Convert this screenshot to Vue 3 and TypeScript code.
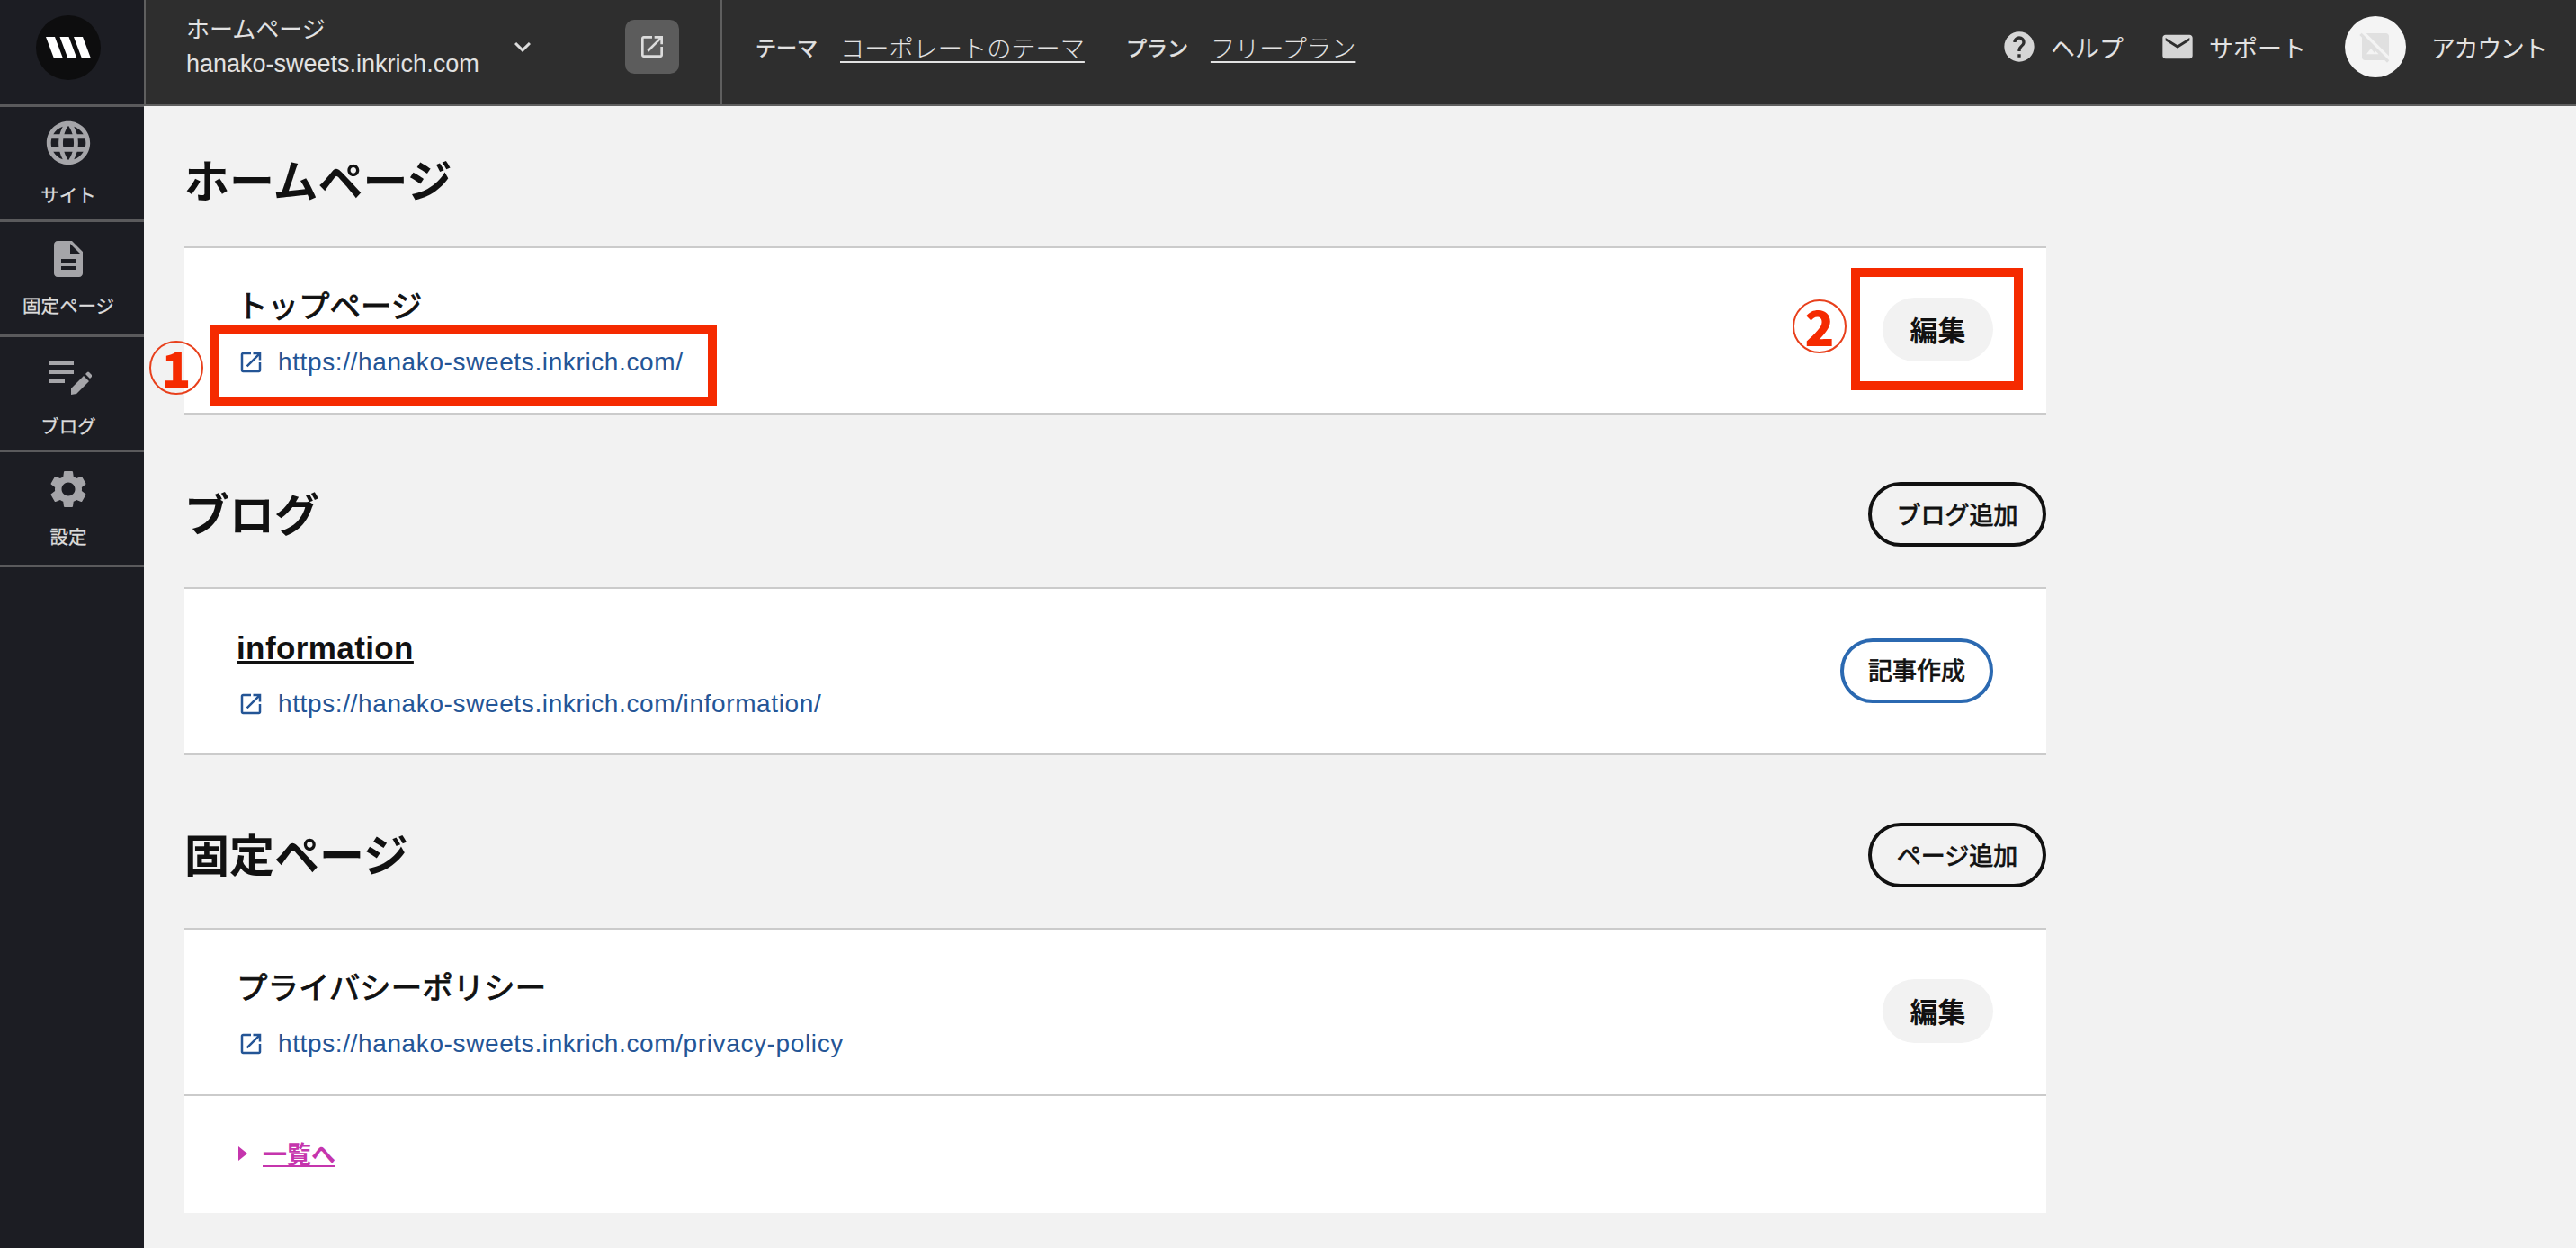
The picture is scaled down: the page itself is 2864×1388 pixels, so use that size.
<script setup lang="ts">
interface NavItem { label: string; kind: string }
const nav: NavItem[] = [
  { label: 'サイト', kind: 'globe' },
  { label: '固定ページ', kind: 'file' },
  { label: 'ブログ', kind: 'blog' },
  { label: '設定', kind: 'gear' },
]
const openPath = 'M19 19H5V5h7V3H5c-1.11 0-2 .9-2 2v14c0 1.1.89 2 2 2h14c1.1 0 2-.9 2-2v-7h-2v7zM14 3v2h3.59l-9.83 9.83 1.41 1.41L19 6.41V10h2V3h-7z'
</script>

<template>
  <div class="app">
    <aside class="side">
      <div class="logo-cell">
        <div class="logo">
          <svg width="50" height="24" viewBox="0 0 50 24"><path d="M0 0h10l9 24H9zM15.5 0h10l9 24h-10zM31 0h10l9 24H40z" fill="#fff"/></svg>
        </div>
      </div>
      <div v-for="n in nav" :key="n.kind" class="nav-item" :class="'nav-' + n.kind">
        <svg v-if="n.kind === 'globe'" width="58" height="58" viewBox="0 0 24 24" fill="#a5a5a9"><path d="M11.99 2C6.47 2 2 6.48 2 12s4.47 10 9.99 10C17.52 22 22 17.52 22 12S17.52 2 11.99 2zm6.93 6h-2.95c-.32-1.25-.78-2.45-1.38-3.56 1.84.63 3.37 1.91 4.33 3.56zM12 4.04c.83 1.2 1.48 2.53 1.91 3.96h-3.82c.43-1.43 1.08-2.76 1.91-3.96zM4.26 14C4.1 13.36 4 12.69 4 12s.1-1.36.26-2h3.38c-.08.66-.14 1.32-.14 2 0 .68.06 1.34.14 2H4.26zm.82 2h2.95c.32 1.25.78 2.45 1.38 3.56-1.84-.63-3.37-1.9-4.33-3.56zm2.95-8H5.08c.96-1.66 2.49-2.93 4.33-3.56C8.81 5.55 8.35 6.75 8.03 8zM12 19.96c-.83-1.2-1.48-2.53-1.91-3.96h3.82c-.43 1.43-1.08 2.76-1.91 3.96zM14.34 14H9.66c-.09-.66-.16-1.32-.16-2 0-.68.07-1.35.16-2h4.68c.09.65.16 1.32.16 2 0 .68-.07 1.34-.16 2zm.25 5.56c.6-1.11 1.06-2.31 1.38-3.56h2.95c-.96 1.65-2.49 2.93-4.33 3.56zM16.36 14c.08-.66.14-1.32.14-2 0-.68-.06-1.34-.14-2h3.38c.16.64.26 1.31.26 2s-.1 1.36-.26 2h-3.38z"/></svg>
        <svg v-else-if="n.kind === 'file'" width="48" height="48" viewBox="0 0 24 24" fill="#a5a5a9"><path d="M14 2H6c-1.1 0-1.99.9-1.99 2L4 20c0 1.1.89 2 1.99 2H18c1.1 0 2-.9 2-2V8l-6-6zm2 16H8v-2h8v2zm0-4H8v-2h8v2zm-3-5V3.5L18.5 9H13z"/></svg>
        <svg v-else-if="n.kind === 'blog'" width="48" height="40" viewBox="0 0 48 40" fill="#a5a5a9"><rect x="0" y="1" width="28" height="5"/><rect x="0" y="11" width="28" height="5"/><rect x="0" y="21" width="18" height="5"/><path d="M25 32 39 18l6 6-14 14-6 1zM41 16l2-2q1-1 2 0l3 3q1 1 0 2l-2 2z"/></svg>
        <svg v-else width="50" height="50" viewBox="0 0 24 24" fill="#a5a5a9"><path d="M19.14 12.94c.04-.3.06-.61.06-.94 0-.32-.02-.64-.07-.94l2.03-1.58c.18-.14.23-.41.12-.61l-1.92-3.32c-.12-.22-.37-.29-.59-.22l-2.39.96c-.5-.38-1.03-.7-1.62-.94l-.36-2.54c-.04-.24-.24-.41-.48-.41h-3.84c-.24 0-.43.17-.47.41l-.36 2.54c-.59.24-1.13.57-1.62.94l-2.39-.96c-.22-.08-.47 0-.59.22L2.74 8.87c-.12.21-.08.47.12.61l2.03 1.58c-.05.3-.09.63-.09.94s.02.64.07.94l-2.03 1.58c-.18.14-.23.41-.12.61l1.92 3.32c.12.22.37.29.59.22l2.39-.96c.5.38 1.03.7 1.62.94l.36 2.54c.05.24.24.41.48.41h3.84c.24 0 .44-.17.47-.41l.36-2.54c.59-.24 1.13-.56 1.62-.94l2.39.96c.22.08.47 0 .59-.22l1.92-3.32c.12-.22.07-.47-.12-.61l-2.01-1.58zM12 15.6c-1.98 0-3.6-1.62-3.6-3.6s1.62-3.6 3.6-3.6 3.6 1.62 3.6 3.6-1.62 3.6-3.6 3.6z"/></svg>
        <span class="nav-label">{{ n.label }}</span>
      </div>
    </aside>

    <div class="right">
      <header class="top">
        <div class="site">
          <div class="site-text">
            <div class="site-name">ホームページ</div>
            <div class="site-domain">hanako-sweets.inkrich.com</div>
          </div>
          <svg class="chev" width="36" height="36" viewBox="0 0 24 24" fill="#dcdcdc"><path d="M7.41 8.59 12 13.17l4.59-4.58L18 10l-6 6-6-6z"/></svg>
          <div class="open-btn">
            <svg width="32" height="32" viewBox="0 0 24 24" fill="#dcdcdc"><path :d="openPath"/></svg>
          </div>
        </div>
        <div class="meta">
          <span class="meta-k">テーマ</span><a class="meta-v theme">コーポレートのテーマ</a>
          <span class="meta-k plan">プラン</span><a class="meta-v">フリープラン</a>
        </div>
        <div class="tools">
          <span class="tool">
            <svg width="40" height="40" viewBox="0 0 24 24" fill="#d6d6d6"><path d="M12 2C6.48 2 2 6.48 2 12s4.48 10 10 10 10-4.48 10-10S17.52 2 12 2zm1 17h-2v-2h2v2zm2.07-7.75l-.9.92C13.45 12.9 13 13.5 13 15h-2v-.5c0-1.1.45-2.1 1.17-2.83l1.24-1.26c.37-.36.59-.86.59-1.41 0-1.1-.9-2-2-2s-2 .9-2 2H8c0-2.21 1.79-4 4-4s4 1.79 4 4c0 .88-.36 1.68-.93 2.25z"/></svg>
            ヘルプ
          </span>
          <span class="tool tool-mail">
            <svg width="40" height="40" viewBox="0 0 24 24" fill="#d6d6d6"><path d="M20 4H4c-1.1 0-1.99.9-1.99 2L2 18c0 1.1.9 2 2 2h16c1.1 0 2-.9 2-2V6c0-1.1-.9-2-2-2zm0 4l-8 5-8-5V6l8 5 8-5v2z"/></svg>
            サポート
          </span>
          <span class="avatar">
            <svg width="40" height="40" viewBox="0 0 24 24" fill="#e0e0e0"><path d="M21 5c0-1.1-.9-2-2-2H5.83L21 18.17V5zM2.81 2.81 1.39 4.22 3 5.83V19c0 1.1.9 2 2 2h13.17l1.61 1.61 1.41-1.41L2.81 2.81zM6 17l3-4 2.25 3 .82-1.1 2.1 2.1H6z"/></svg>
          </span>
          <span class="account">アカウント</span>
        </div>
      </header>

      <main class="main">
        <section class="sec sec-first">
          <div class="sec-head head-plain"><h2>ホームページ</h2></div>
          <div class="card">
            <div class="row">
              <div>
                <div class="title">トップページ</div>
                <a class="url"><svg width="30" height="30" viewBox="0 0 24 24" fill="#245596"><path :d="openPath"/></svg>https://hanako-sweets.inkrich.com/</a>
              </div>
              <button class="pill-soft">編集</button>
            </div>
            <div class="mark-box box-1"></div>
            <div class="mark mark-1">1</div>
            <div class="mark-box box-2"></div>
            <div class="mark mark-2">2</div>
          </div>
        </section>

        <section class="sec">
          <div class="sec-head"><h2>ブログ</h2><button class="pill-line">ブログ追加</button></div>
          <div class="card">
            <div class="row">
              <div>
                <div class="title title-link">information</div>
                <a class="url"><svg width="30" height="30" viewBox="0 0 24 24" fill="#245596"><path :d="openPath"/></svg>https://hanako-sweets.inkrich.com/information/</a>
              </div>
              <button class="pill-line pill-blue">記事作成</button>
            </div>
          </div>
        </section>

        <section class="sec">
          <div class="sec-head"><h2>固定ページ</h2><button class="pill-line">ページ追加</button></div>
          <div class="card">
            <div class="row">
              <div>
                <div class="title">プライバシーポリシー</div>
                <a class="url"><svg width="30" height="30" viewBox="0 0 24 24" fill="#245596"><path :d="openPath"/></svg>https://hanako-sweets.inkrich.com/privacy-policy</a>
              </div>
              <button class="pill-soft">編集</button>
            </div>
            <div class="more"><i class="tri"></i><a>一覧へ</a></div>
          </div>
        </section>
      </main>
    </div>
  </div>
</template>

<style>
html, body { margin: 0; background: #f2f2f2; }
</style>

<style scoped>
.app {
  display: flex;
  width: 2864px;
  height: 1388px;
  overflow: hidden;
  font-family: "Liberation Sans", "Noto Sans CJK JP", sans-serif;
  color: #111;
  background: #f2f2f2;
}
.side { width: 160px; flex: none; background: #1c1d23; color: #dcdcdc; }
.logo-cell {
  height: 116px;
  box-sizing: content-box;
  border-bottom: 3px solid #5a5a5c;
  padding-right: 8px;
  display: flex;
  align-items: flex-start;
  justify-content: center;
}
.logo {
  margin-top: 17px;
  width: 72px;
  height: 72px;
  border-radius: 50%;
  background: #0d0d0e;
  display: flex;
  align-items: center;
  justify-content: center;
}
.nav-item {
  height: 125px;
  border-bottom: 3px solid #5a5a5c;
  padding-right: 8px;
  display: flex;
  flex-direction: column;
  align-items: center;
}
.nav-globe svg { margin-top: 11px; }
.nav-file svg { margin-top: 17px; }
.nav-blog svg { margin-top: 25px; margin-left: 4px; }
.nav-gear svg { margin-top: 16px; }
.nav-label { font-size: 20.5px; line-height: 28px; white-space: nowrap; -webkit-text-stroke: .3px currentColor; }
.nav-globe .nav-label { margin-top: 16px; }
.nav-file .nav-label { margin-top: 15px; }
.nav-blog .nav-label { margin-top: 21px; }
.nav-gear .nav-label { margin-top: 15px; }

.right { flex: 1; min-width: 0; display: flex; flex-direction: column; }
.top {
  height: 116px;
  flex: none;
  background: #2e2e2e;
  border-bottom: 2px solid #5f5f5f;
  display: flex;
  align-items: center;
  color: #e2e2e2;
}
.site {
  width: 643px;
  height: 116px;
  box-sizing: border-box;
  border-left: 2px solid #5f5f5f;
  border-right: 2px solid #5f5f5f;
  padding: 0 0 12px 45px;
  display: flex;
  align-items: center;
}
.site-text { width: 356px; }
.site-name { font-size: 26px; line-height: 38px; }
.site-domain { font-size: 27px; line-height: 38px; }
.open-btn {
  margin-left: 96px;
  width: 60px;
  height: 60px;
  border-radius: 10px;
  background: #5c5c5c;
  display: flex;
  align-items: center;
  justify-content: center;
}
.meta { margin: 0 0 12px 37px; display: flex; align-items: center; }
.meta-k { font-size: 23px; font-weight: 400; -webkit-text-stroke: .6px currentColor; margin-right: 25px; }
.meta-v { font-size: 27.2px; text-decoration: underline; text-underline-offset: 4px; font-weight: 300; }
.plan { margin-left: 46px; }
.tools { margin: 0 33px 12px auto; display: flex; align-items: center; font-size: 27px; }
.tool { display: flex; align-items: center; gap: 15px; }
.tool-mail { margin-left: 40px; }
.avatar {
  margin-left: 43px;
  width: 68px;
  height: 68px;
  border-radius: 50%;
  background: #f4f4f4;
  display: flex;
  align-items: center;
  justify-content: center;
}
.account { margin-left: 28px; letter-spacing: -1.4px; }

.main { padding: 57px 0 0 45px; width: 2070px; }
.sec { margin-top: 75px; }
.sec-first { margin-top: 0; }
.sec-head {
  height: 72px;
  margin-bottom: 45px;
  display: flex;
  align-items: center;
  justify-content: space-between;
}
.head-plain { height: 52px; margin-bottom: 47px; }
h2 { margin: 0; padding-top: 4px; font-size: 50px; font-weight: 700; line-height: 52px; }
.card {
  position: relative;
  background: #fff;
  border-top: 2px solid #cbcbcb;
}
.row {
  height: 185px;
  box-sizing: border-box;
  border-bottom: 2px solid #cbcbcb;
  padding: 6px 59px 0 58px;
  display: flex;
  align-items: center;
  justify-content: space-between;
}
.title { font-size: 34.5px; font-weight: 400; -webkit-text-stroke: .9px currentColor; line-height: 44px; }
.title-link { font-family: "Liberation Sans", sans-serif; font-weight: 700; -webkit-text-stroke: 0; font-size: 35px; padding-top: 3px; margin-bottom: 1px; letter-spacing: .4px; text-decoration: underline; }
.url {
  margin-top: 20px;
  padding-left: 1px;
  display: flex;
  align-items: center;
  gap: 15px;
  font-size: 28px;
  letter-spacing: .62px;
  line-height: 40px;
  color: #245596;
}
.pill-soft {
  width: 123px;
  height: 71px;
  margin-top: -8px;
  border: 0;
  border-radius: 36px;
  background: #f2f2f2;
  font: 700 31px "Liberation Sans", "Noto Sans CJK JP", sans-serif;
  color: #111;
  padding: 0 0 2px;
}
.pill-line {
  width: 198px;
  height: 72px;
  border: 4px solid #111;
  border-radius: 36px;
  background: transparent;
  font: 400 27px "Liberation Sans", "Noto Sans CJK JP", sans-serif;
  -webkit-text-stroke: .8px currentColor;
  color: #111;
  padding: 0 0 2px;
}
.pill-blue { width: 170px; margin-top: -8px; border-color: #2b69b1; background: #fff; }
.more { height: 130px; display: flex; align-items: center; padding: 0 59px 3px 60px; gap: 17px; box-sizing: border-box; }
.tri { width: 0; height: 0; border-left: 10px solid #c535ad; border-top: 8px solid transparent; border-bottom: 8px solid transparent; }
.more a { font-size: 27px; font-weight: 700; color: #c535ad; text-decoration: underline; }

.mark-box { position: absolute; box-sizing: border-box; border: 10px solid #f52a00; }
.box-1 { left: 28px; top: 86px; width: 564px; height: 89px; }
.box-2 { left: 1853px; top: 22px; width: 191px; height: 136px; }
.mark {
  position: absolute;
  width: 60px;
  height: 60px;
  box-sizing: border-box;
  border: 2px solid #e8401c;
  border-radius: 50%;
  color: #f52a00;
  font-family: "Noto Sans CJK JP", sans-serif;
  font-weight: 900;
  font-size: 54px;
  line-height: 54px;
  text-align: center;
}
.mark-1 { left: -39px; top: 103px; }
.mark-2 { left: 1788px; top: 57px; }
</style>
